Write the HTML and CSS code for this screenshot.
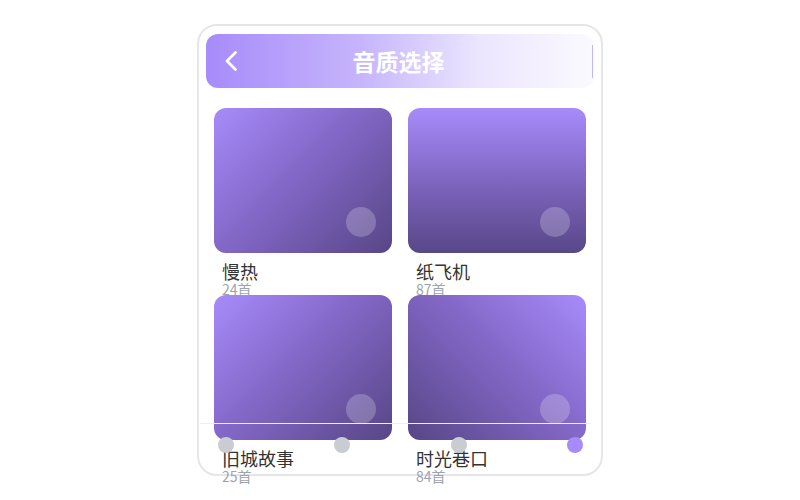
FILE: index.html
```html
<!DOCTYPE html>
<html lang="zh">
<head>
<meta charset="utf-8">
<title>音质选择</title>
<link rel="stylesheet" href="styles.css">
</head>
<body>
<div class="phone">
  <header class="header">
    <span class="back">
      <svg width="20" height="20" viewBox="0 0 20 20"><path d="M14.5 1.5 L6 10 L14.5 18.5" fill="none" stroke="#fff" stroke-width="2.8" stroke-linecap="round" stroke-linejoin="round"/></svg>
    </span>
    <h1 class="title">音质选择</h1>
    <span class="edge"></span>
  </header>
  <main class="grid">
    <div class="item">
      <div class="card card-a"><span class="knob"></span></div>
      <div class="name">慢热</div>
      <div class="count">24首</div>
    </div>
    <div class="item">
      <div class="card card-b"><span class="knob"></span></div>
      <div class="name">纸飞机</div>
      <div class="count">87首</div>
    </div>
    <div class="item">
      <div class="card card-a"><span class="knob"></span></div>
      <div class="name">旧城故事</div>
      <div class="count">25首</div>
    </div>
    <div class="item">
      <div class="card card-d"><span class="knob"></span></div>
      <div class="name">时光巷口</div>
      <div class="count">84首</div>
    </div>
  </main>
  <nav class="tabbar">
    <span class="dot"></span>
    <span class="dot"></span>
    <span class="dot"></span>
    <span class="dot active"></span>
  </nav>
</div>
</body>
</html>
```
FILE: styles.css
```css
* { box-sizing: border-box; }
html, body { margin: 0; padding: 0; }
body {
  height: 100vh;
  display: flex;
  align-items: center;
  justify-content: center;
  background: #fff;
  font-family: "Noto Sans CJK SC", "Noto Sans", sans-serif;
}
.phone {
  position: relative;
  width: 406px;
  height: 452px;
  border: 2px solid #e6e6ea;
  border-radius: 20px;
  padding: 8px 7px 0 7px;
  background: #fff;
}
.header {
  height: 54px;
  border-radius: 12px;
  background: linear-gradient(90deg, #a78bfa 0%, #c6b5fc 40%, #ebe5fe 70%, #fbfaff 100%);
  display: grid;
  grid-template-columns: 40px 1fr 40px;
  align-items: center;
  padding: 0;
}
.back { width: 20px; height: 20px; display: flex; margin-left: 15px; }
.title {
  margin: 0;
  text-align: center;
  color: #fff;
  font-size: 23px;
  font-weight: 700;
  line-height: 1;
  padding-right: 3px;
}
.edge {
  justify-self: end;
  width: 1px;
  height: 33px;
  margin-right: 1px;
  background: #c4b5fd;
}
.grid {
  margin-top: 20px;
  padding: 0 8px;
  display: grid;
  grid-template-columns: 178px 178px;
  column-gap: 16px;
  justify-content: center;
}
.item { height: 187px; }
.card {
  height: 145px;
  border-radius: 12px;
  display: flex;
  justify-content: flex-end;
  align-items: flex-end;
  padding: 16px;
}
.card-a { background: linear-gradient(135deg, #a78bfa 0%, #8468c8 45%, #574686 100%); }
.card-b { background: linear-gradient(180deg, #a78bfa 0%, #7f66c0 50%, #584788 100%); }
.card-d { background: linear-gradient(225deg, #a78bfa 0%, #8468c8 45%, #574686 100%); }
.knob {
  width: 30px;
  height: 30px;
  border-radius: 50%;
  background: rgba(255, 255, 255, 0.22);
}
.name {
  margin-top: 8px;
  padding-left: 8px;
  font-size: 18px;
  line-height: 21px;
  color: #333;
}
.count {
  padding-left: 8px;
  font-size: 14px;
  line-height: 14px;
  color: #9ca3af;
}
.tabbar {
  position: absolute;
  left: 1px;
  right: 10px;
  bottom: 0;
  height: 51px;
  border-top: 1px solid #eeeef2;
  display: flex;
  justify-content: space-between;
  align-items: flex-start;
  padding: 13px 8px 0 18px;
}
.dot {
  width: 16px;
  height: 16px;
  border-radius: 50%;
  background: #c9ccd1;
}
.dot.active { background: #a78bfa; }
```
